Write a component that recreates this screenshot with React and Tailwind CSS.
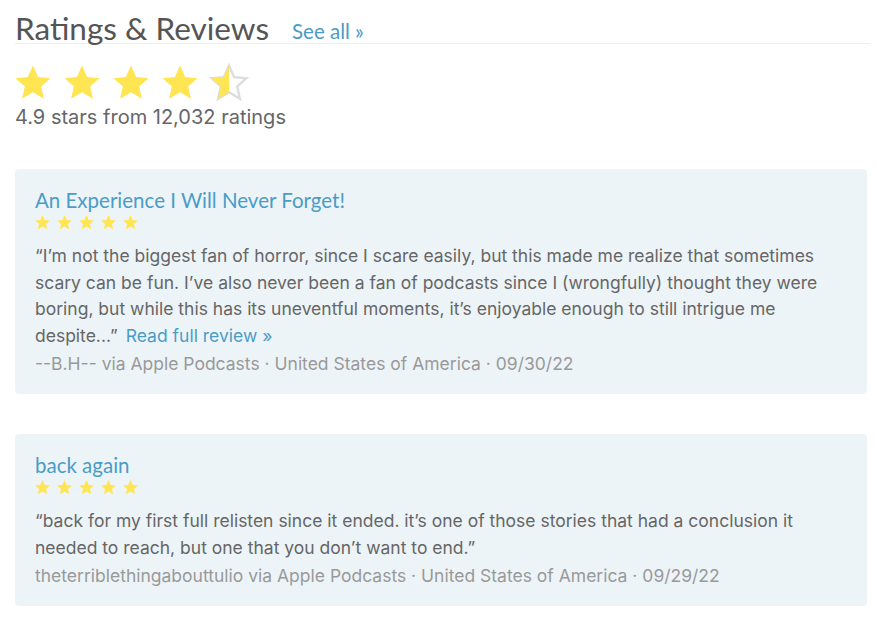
const reviews = [
  {
    title: "An Experience I Will Never Forget!",
    body: "“I’m not the biggest fan of horror, since I scare easily, but this made me realize that sometimes scary can be fun. I’ve also never been a fan of podcasts since I (wrongfully) thought they were boring, but while this has its uneventful moments, it’s enjoyable enough to still intrigue me despite...”",
    more: true,
    author: "--B.H--",
    date: "09/30/22",
  },
  {
    title: "back again",
    body: "“back for my first full relisten since it ended. it’s one of those stories that had a conclusion it needed to reach, but one that you don’t want to end.”",
    more: false,
    author: "theterriblethingabouttulio",
    date: "09/29/22",
  },
]

const STAR = "M12 1.5l3.09 6.97 7.41.68-5.6 4.93 1.66 7.42L12 17.6l-6.56 3.9 1.66-7.42-5.6-4.93 7.41-.68z"

function Star({ size, fill = 1 }) {
  // fill: 1 = full, 0.5 = half
  return (
    <svg width={size} height={size} viewBox="0 0 24 24">
      <defs>
        <clipPath id={`half-${size}`}>
          <rect x="0" y="0" width="12" height="24" />
        </clipPath>
      </defs>
      {fill < 1 && <path d={STAR} fill="none" stroke="#dddddd" strokeWidth="1.4" strokeLinejoin="miter" />}
      <path d={STAR} fill="#ffe552" clipPath={fill < 1 ? `url(#half-${size})` : undefined} />
    </svg>
  )
}

function App() {
  return (
    <div className="bg-white w-[877px] h-[620px] overflow-hidden pl-[15px] pr-[10px] pt-[10px]" style={{ fontFamily: "Inter, 'Noto Sans', sans-serif" }}>
      {/* Header */}
      <div className="flex items-end gap-[23px] border-b border-[#eeeeee] h-[34px] mr-[-3px]">
        <h2 className="text-[31.5px] leading-[38px] text-[#555555] mb-[-4px]" style={{ fontFamily: "Lato, sans-serif" }}>
          Ratings &amp; Reviews
        </h2>
        <a className="text-[20.5px] leading-[30px] text-[#4a9cc7] mb-[-3px]" style={{ fontFamily: "Lato, sans-serif" }}>
          See all »
        </a>
      </div>

      {/* Overall rating */}
      <div className="flex gap-[9px] mt-[19px] -ml-[2px]">
        <Star size={40} />
        <Star size={40} />
        <Star size={40} />
        <Star size={40} />
        <Star size={40} fill={0.5} />
      </div>
      <p className="text-[20px] leading-[26px] text-[#666666] mt-[1px]">4.9 stars from 12,032 ratings</p>

      {/* Reviews */}
      <div className="flex flex-col gap-[40px] mt-[39px]">
        {reviews.map((r) => (
          <div key={r.title} className="bg-[#edf4f8] rounded-[4px] px-[20px] pt-[17px] pb-[15px]">
            <h3 className="text-[20.5px] leading-[28px] text-[#4a9cc7]" style={{ fontFamily: "Lato, sans-serif" }}>
              {r.title}
            </h3>
            <div className="flex gap-[5px] -ml-[1px]">
              {[0, 1, 2, 3, 4].map((i) => (
                <Star key={i} size={17} />
              ))}
            </div>
            <p className="text-[17.5px] leading-[26.5px] text-[#666666] mt-[12px]">
              {r.body}
              {r.more && <span className="text-[#4a9cc7] pl-[8px]">Read full review »</span>}
            </p>
            <p className="text-[17.5px] leading-[30px] text-[#999999]">
              {r.author} via Apple Podcasts · United States of America · {r.date}
            </p>
          </div>
        ))}
      </div>
    </div>
  )
}

export default App
